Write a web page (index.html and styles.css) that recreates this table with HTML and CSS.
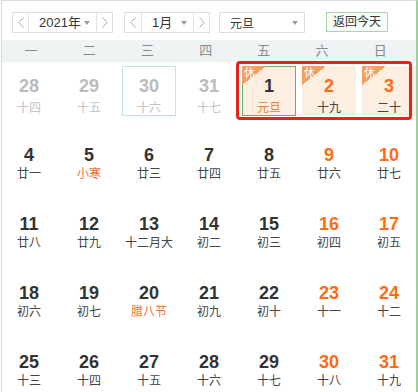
FILE: index.html
```html
<!DOCTYPE html>
<html lang="zh">
<head>
<meta charset="utf-8">
<link rel="stylesheet" href="styles.css">
</head>
<body>
<div class="cal">
  <div class="toolbar">
    <div class="picker year">
      <span class="btn"><svg width="6" height="11" viewBox="0 0 6 11"><polyline points="5.5,0.5 0.8,5.5 5.5,10.5" fill="none" stroke="#aaa" stroke-width="1"/></svg></span>
      <span class="val">2021年<i class="caret"></i></span>
      <span class="btn next"><svg width="6" height="11" viewBox="0 0 6 11"><polyline points="0.5,0.5 5.2,5.5 0.5,10.5" fill="none" stroke="#aaa" stroke-width="1"/></svg></span>
    </div>
    <div class="picker month">
      <span class="btn"><svg width="6" height="11" viewBox="0 0 6 11"><polyline points="5.5,0.5 0.8,5.5 5.5,10.5" fill="none" stroke="#aaa" stroke-width="1"/></svg></span>
      <span class="val">1月<i class="caret"></i></span>
      <span class="btn next"><svg width="6" height="11" viewBox="0 0 6 11"><polyline points="0.5,0.5 5.2,5.5 0.5,10.5" fill="none" stroke="#aaa" stroke-width="1"/></svg></span>
    </div>
    <div class="select">元旦<i class="caret"></i></div>
    <div class="today">返回今天</div>
  </div>
  <div class="week-bar">
    <div class="week"><span>一</span><span>二</span><span>三</span><span>四</span><span>五</span><span>六</span><span>日</span></div>
  </div>
  <div class="days">
    <div class="cell other first"><b>28</b><em>十四</em></div>
    <div class="cell other first"><b>29</b><em>十五</em></div>
    <div class="cell other first hover"><b>30</b><em>十六</em></div>
    <div class="cell other first"><b>31</b><em>十七</em></div>
    <div class="cell rest today-cell first"><b>1</b><em class="fest">元旦</em></div>
    <div class="cell rest wk first"><b>2</b><em>十九</em></div>
    <div class="cell rest wk first"><b>3</b><em>二十</em></div>

    <div class="cell"><b>4</b><em>廿一</em></div>
    <div class="cell"><b>5</b><em class="fest">小寒</em></div>
    <div class="cell"><b>6</b><em>廿三</em></div>
    <div class="cell"><b>7</b><em>廿四</em></div>
    <div class="cell"><b>8</b><em>廿五</em></div>
    <div class="cell wk"><b>9</b><em>廿六</em></div>
    <div class="cell wk"><b>10</b><em>廿七</em></div>

    <div class="cell"><b>11</b><em>廿八</em></div>
    <div class="cell"><b>12</b><em>廿九</em></div>
    <div class="cell"><b>13</b><em>十二月大</em></div>
    <div class="cell"><b>14</b><em>初二</em></div>
    <div class="cell"><b>15</b><em>初三</em></div>
    <div class="cell wk"><b>16</b><em>初四</em></div>
    <div class="cell wk"><b>17</b><em>初五</em></div>

    <div class="cell"><b>18</b><em>初六</em></div>
    <div class="cell"><b>19</b><em>初七</em></div>
    <div class="cell"><b>20</b><em class="fest">腊八节</em></div>
    <div class="cell"><b>21</b><em>初九</em></div>
    <div class="cell"><b>22</b><em>初十</em></div>
    <div class="cell wk"><b>23</b><em>十一</em></div>
    <div class="cell wk"><b>24</b><em>十二</em></div>

    <div class="cell"><b>25</b><em>十三</em></div>
    <div class="cell"><b>26</b><em>十四</em></div>
    <div class="cell"><b>27</b><em>十五</em></div>
    <div class="cell"><b>28</b><em>十六</em></div>
    <div class="cell"><b>29</b><em>十七</em></div>
    <div class="cell wk"><b>30</b><em>十八</em></div>
    <div class="cell wk"><b>31</b><em>十九</em></div>
  </div>
  <div class="mark"></div>
</div>
</body>
</html>
```
FILE: styles.css
```css
html, body {
  margin: 0;
  padding: 0;
  overflow: hidden;
  background: #fff;
}
body {
  font-family: "Liberation Sans", "Noto Sans CJK SC", sans-serif;
  color: #333;
}
.cal {
  position: relative;
  margin-left: 1px;
  width: 414px;
  height: 420px;
  border-top: 1px solid #dcdcdc;
  border-left: 1px solid #d8d8d8;
  border-right: 2px solid #9fd09f;
}
.toolbar {
  display: flex;
  align-items: flex-start;
  padding: 11px 0 0 10px;
  height: 28px;
}
.picker {
  display: flex;
  box-sizing: border-box;
  height: 21px;
  border: 1px solid #dedede;
  font-size: 13px;
}
.year { width: 101px; }
.month { width: 86px; margin-left: 11px; }
.btn {
  width: 15px;
  display: flex;
  align-items: center;
  justify-content: center;
  border-right: 1px solid #e3e3e3;
}
.month .btn:first-child { width: 16px; }
.btn.next {
  border-right: none;
  border-left: 1px solid #e3e3e3;
}
.val {
  flex: 1;
  display: flex;
  align-items: center;
  justify-content: space-between;
  padding: 0 6px 0 10px;
  line-height: 19px;
}
.caret {
  display: inline-block;
  width: 0;
  height: 0;
  border-left: 3.5px solid transparent;
  border-right: 3.5px solid transparent;
  border-top: 4px solid #9a9a9a;
}
.select {
  box-sizing: border-box;
  width: 86px;
  height: 21px;
  margin-left: 9px;
  border: 1px solid #dedede;
  display: flex;
  align-items: center;
  justify-content: space-between;
  padding: 0 6px 0 10px;
  font-size: 12px;
}
.today {
  box-sizing: border-box;
  width: 62px;
  height: 20px;
  margin-left: 21px;
  border: 1px solid #a6d8ac;
  background: #f8fdf8;
  font-size: 12px;
  line-height: 18px;
  text-align: center;
  color: #333;
}
.week-bar {
  height: 22px;
  background: #eff3f4;
}
.week {
  display: grid;
  grid-template-columns: repeat(7, 58.2px);
  font-size: 13px;
  line-height: 22px;
  color: #8a8a8a;
  text-align: center;
}
.days {
  display: grid;
  grid-template-columns: repeat(7, 60px);
  grid-auto-rows: 69px;
  margin-left: -3px;
  width: 420px;
}
.cell {
  position: relative;
  box-sizing: border-box;
  margin: 4px 3px 0;
  height: 50px;
  border: 1px solid transparent;
  padding-top: 9px;
  text-align: center;
}
.cell b {
  display: block;
  font-size: 18px;
  line-height: 20px;
  font-weight: bold;
  color: #333;
}
.cell em {
  display: block;
  font-style: normal;
  font-size: 12px;
  line-height: 16px;
  color: #444;
  font-family: "Noto Sans CJK SC", sans-serif;
}
.cell.first em { margin-top: 3px; }
.cell.other b { color: #bbbbbb; }
.cell.other em { color: #c4c4c4; }
.cell.wk b { color: #ff6a13; }
.cell em.fest { color: #f0703a; }
.cell.hover { border-color: #c4e5dc; }
.cell.rest { background: #fdeee2; }
.cell.rest::before {
  content: "";
  position: absolute;
  left: -1px;
  top: -1px;
  width: 24px;
  height: 19px;
  background: linear-gradient(to bottom right, #f79d5e 50%, transparent 50%);
}
.cell.rest::after {
  content: "休";
  position: absolute;
  left: 1px;
  top: -1px;
  font-size: 11px;
  line-height: 13px;
  color: #fff;
  font-family: "Noto Sans CJK SC", sans-serif;
}
.cell.today-cell { border-color: #5ab55e; }
.cell.today-cell em.fest { color: #e8802a; }
.mark {
  position: absolute;
  left: 234px;
  top: 60px;
  width: 176px;
  height: 59px;
  box-sizing: border-box;
  border: 3px solid #e5231b;
  border-radius: 4px;
}
```
